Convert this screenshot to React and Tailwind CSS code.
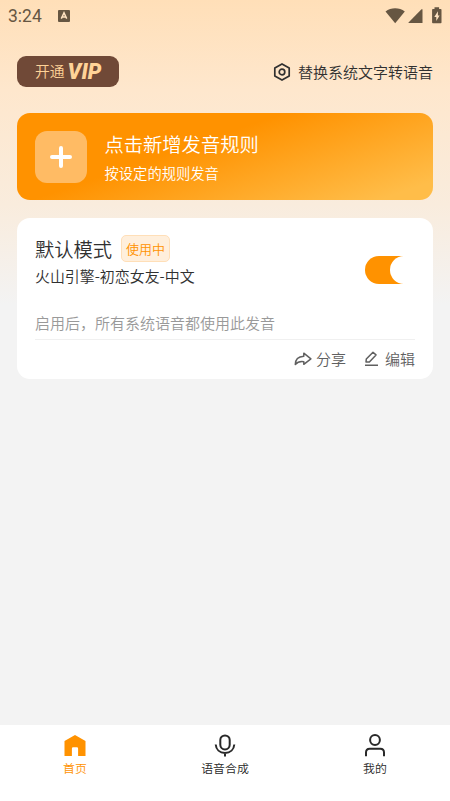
function StatusBar() {
  return (
    <header className="flex h-8 shrink-0 items-center justify-between pl-2 pr-2 text-[#665642]">
      <div className="flex items-center gap-4">
        <span className="font-['Roboto',sans-serif] text-[17.5px] font-normal leading-8">3:24</span>
        <svg className="h-3 w-3" viewBox="0 0 12 12">
          <rect width="12" height="12" rx="1" fill="currentColor" />
          <path d="M3.3 8.6 6 2.8 8.7 8.6M4.4 6.9h3.2" fill="none" stroke="#ffe3c2" strokeWidth="1.5" />
        </svg>
      </div>
      <svg className="-mt-0.5 h-[17px] w-[57px]" viewBox="0 0 57 17" fill="currentColor">
        <path d="M.5 4.6C6 .2 14.300.2 19.800 4.600L10.200 16.200Z" />
        <path d="M23.500 16V15.600L36.500 2.200H37.500V16Z" />
        <path d="M49.500.3h4.600v1.600h1.600q.8 0 .8.800v12.700q0 .8-.8.800h-7.800q-.8 0-.8-.800V2.700q0-.8.800-.800h1.600Z" />
        <path d="M52.900 4.200 49.300 9.900h2v4.200l3.300-5.700h-1.700Z" fill="#ffe3c2" />
      </svg>
    </header>
  );
}

function NavItem({ label, active, children }) {
  return (
    <div className={`flex flex-1 flex-col items-center ${active ? "text-[#ff9200]" : "text-[#292929]"}`}>
      <svg className="mt-[9px] h-6 w-6" viewBox="0 0 24 24" fill="none" stroke="currentColor" strokeWidth="2">
        {children}
      </svg>
      <span className="mt-[2px] text-[11.9px] leading-4">{label}</span>
    </div>
  );
}

export default function App() {
  return (
    <div className="flex h-[801px] w-[450px] flex-col overflow-hidden bg-[linear-gradient(180deg,#ffdfb8_0px,#fee7cd_90px,#f9ecdd_205px,#f3f3f3_305px)] font-['Noto_Sans_CJK_SC',sans-serif] font-[350] text-[#303030]">
      <StatusBar />

      <div className="mx-[17px] mt-6 flex h-[31px] items-center justify-between">
        <div className="flex h-[31px] w-[102px] items-center rounded-[9px] bg-[#704937] pl-[18px] text-[#ffd398]">
          <span className="text-[14.8px] leading-none">开通</span>
          <span className="ml-[3px] font-['Roboto',sans-serif] text-[21.500px] font-black italic leading-none">VIP</span>
        </div>
        <div className="flex items-center gap-[7px]">
          <svg className="h-[18px] w-[18px]" viewBox="0 0 18 18" fill="none" stroke="currentColor" strokeWidth="1.7" strokeLinejoin="round">
            <path d="M9 .900 16.200 4.900V13.100L9 17.100 1.800 13.100V4.900Z" />
            <circle cx="9" cy="9" r="2.800" />
          </svg>
          <span className="text-[15px] leading-5">替换系统文字转语音</span>
        </div>
      </div>

      <section className="mx-[17px] mt-[26px] flex h-[87px] shrink-0 items-center rounded-[13px] bg-[linear-gradient(161deg,#ff9200_40%,#ffbd49_92%)] pl-[18px] text-white">
        <div className="flex h-[52px] w-[52px] items-center justify-center rounded-[12px] bg-[#ffbb64]">
          <svg className="h-[22px] w-[22px]" viewBox="0 0 22 22" fill="none" stroke="currentColor" strokeWidth="4" strokeLinecap="round">
            <path d="M11 2v18M2 11h18" />
          </svg>
        </div>
        <div className="ml-[17.500px] flex flex-col">
          <span className="mt-px text-[19.3px] leading-7">点击新增发音规则</span>
          <span className="mt-[3px] text-[14.3px] leading-6">按设定的规则发音</span>
        </div>
      </section>

      <section className="mx-[17px] mt-[18px] flex h-[161px] shrink-0 flex-col rounded-[13px] bg-white px-[18px]">
        <div className="mt-[17px] flex h-[69px] items-start justify-between">
          <div>
            <div className="flex h-[27px] items-center">
              <span className="text-[19.3px] leading-7">默认模式</span>
              <span className="ml-[9px] flex h-[27px] w-[49px] items-center justify-center rounded-[5px] border border-[#ffdfb8] bg-[#ffefdc] text-[13px] text-[#ff9200]">使用中</span>
            </div>
            <p className="mt-[2px] text-[14.95px] leading-6">火山引擎-初恋女友-中文</p>
          </div>
          <div className="mt-[21px] flex h-7 w-[50px] justify-end rounded-full bg-[linear-gradient(90deg,#ff9200_76%,#fff5e8_76%)]">
            <div className="h-7 w-[25.500px] rounded-l-[14px] rounded-r-[11px] bg-white" />
          </div>
        </div>
        <p className="mt-[7px] text-[15px] leading-6 text-[#999]">启用后，所有系统语音都使用此发音</p>
        <div className="mt-[4px] flex h-10 items-center justify-end border-t border-[#f0f0f0] text-[15px] text-[#606060]">
          <svg className="mr-1 h-[17px] w-[18px]" viewBox="0 0 18 17" fill="none" stroke="currentColor" strokeWidth="1.500" strokeLinejoin="round">
            <path d="M9.800 2.200 16.900 7.900 9.800 13.300V10.700C6 10.100 3.500 11 1.300 13.500 1.300 8.500 4.300 5.500 9.800 5.200Z" />
          </svg>
          <span>分享</span>
          <svg className="ml-[18px] mr-[6px] h-[17px] w-[15px]" viewBox="0 0 15 17" fill="none" stroke="currentColor" strokeWidth="1.500" strokeLinejoin="round">
            <path d="M9 1.200 12 3.900 5.400 11 2 11.100 2.300 8.100ZM1 14.200h13" />
          </svg>
          <span>编辑</span>
        </div>
      </section>

      <nav className="mt-auto flex h-[76px] shrink-0 bg-white">
        <NavItem label="首页" active>
          <path d="M12 .900 22.500 7V22H15.100V14.500Q15.100 13.300 13.900 13.300H10.100Q8.900 13.300 8.900 14.500V22H1.500V7Z" fill="currentColor" stroke="none" />
        </NavItem>
        <NavItem label="语音合成">
          <rect x="7.300" y="1.400" width="9.400" height="14" rx="4.700" />
          <path d="M2.700 10.500c.4 5 4 8.500 9.300 8.500s8.900-3.500 9.300-8.500M12 19V22.500" />
        </NavItem>
        <NavItem label="我的">
          <circle cx="12" cy="6" r="4.900" />
          <path d="M3 22.300V18.500Q3 14.800 6.700 14.800H17.300Q21 14.800 21 18.500V22.300" />
        </NavItem>
      </nav>
    </div>
  );
}
